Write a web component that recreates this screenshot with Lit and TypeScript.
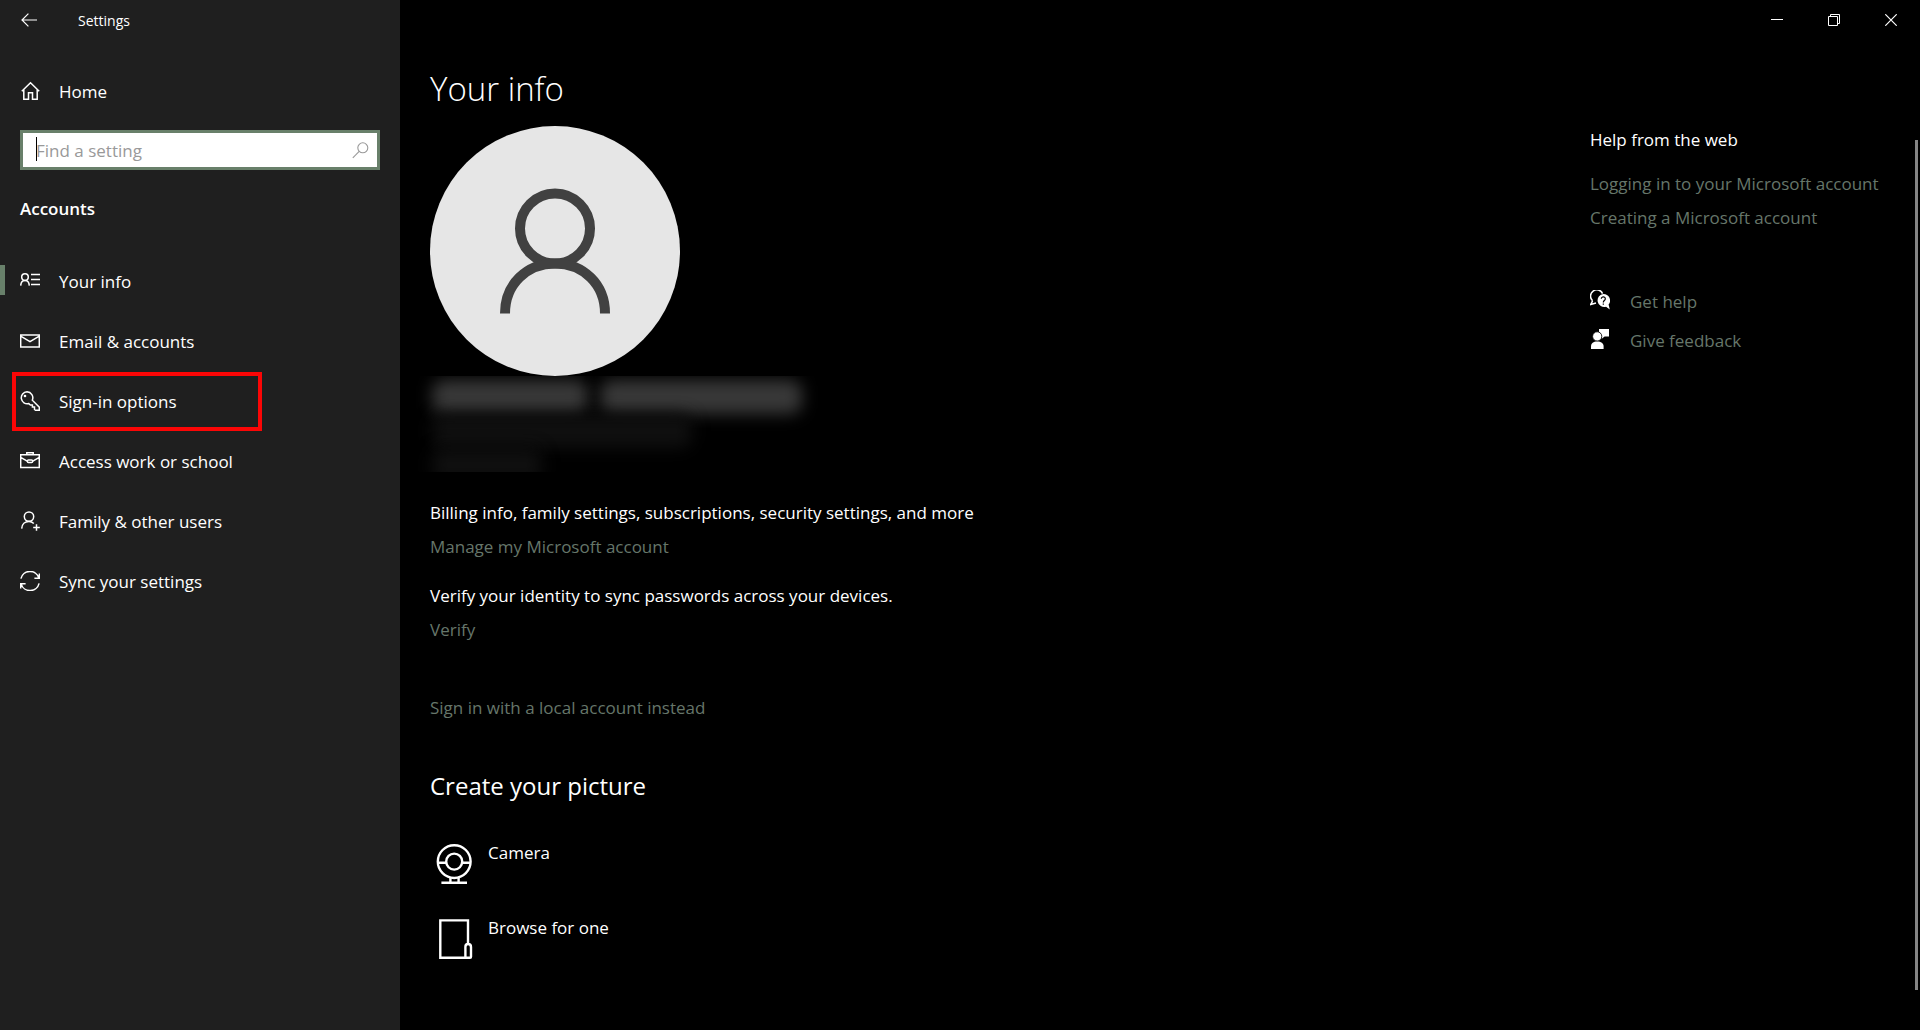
import { LitElement, html, css, svg } from "lit";
import { customElement, state } from "lit/decorators.js";
import { classMap } from "lit/directives/class-map.js";

const stroke = (body: unknown) => html`<svg class="glyph" viewBox="0 0 20 20" width="20" height="20" fill="none" stroke="currentColor" stroke-width="1.5" aria-hidden="true">${body}</svg>`;

const icons = {
  home: svg`<path d="M1.8 10.2 L10.5 1.8 L19.2 10.2 M3.8 8.6 V18.2 H8.5 V11.8 H12.5 V18.2 H17.2 V8.6" />`,
  info: svg`<circle cx="5" cy="6.1" r="3.3" /><path d="M0.7 14.6 C0.9 11.4 2.8 9.5 5 9.5 S9.1 11.4 9.3 14.6 M11 3.5 H20 M11 8.5 H20 M11 13.5 H20" />`,
  mail: svg`<path d="M0.7 4 H19.3 V16 H0.7 Z M0.7 5.2 L10 10.6 L19.3 5.2" />`,
  key: svg`<path d="M7 0.8 A6 6 0 1 0 8.8 12.6 L10.4 14 H12.4 V16 H14.5 V18.4 L15.6 19.3 H19.3 V16.2 L12.3 9.2 A6 6 0 0 0 7 0.8 Z" /><circle cx="5" cy="5" r="1.3" fill="currentColor" stroke="none" />`,
  work: svg`<path d="M0.7 3.8 H19.3 V16.5 H0.7 Z M6.8 3.8 V1.8 H13.2 V3.8 M0.7 6.4 L7.2 10.2 M12.8 10.2 L19.3 6.4" /><rect x="7.4" y="9" width="5.2" height="2.6" rx="1" />`,
  family: svg`<circle cx="9" cy="5.6" r="4.7" /><path d="M1.7 17.6 C1.9 13.2 5 10.4 9 10.4 C11 10.4 12.6 11.3 13.8 12.5 M16.5 13.2 V19.8 M13.2 16.5 H19.8" />`,
  sync: svg`<path d="M0.9 7.6 A9.3 9.3 0 0 1 18.8 6.8 M19.4 2.4 V7.3 H14.4 M19.1 12.4 A9.3 9.3 0 0 1 1.2 13.2 M0.7 17.6 V12.7 H5.6" />`,
};

const navItems = [
  { icon: icons.info, label: "Your info" },
  { icon: icons.mail, label: "Email & accounts" },
  { icon: icons.key, label: "Sign-in options", marked: true },
  { icon: icons.work, label: "Access work or school" },
  { icon: icons.family, label: "Family & other users" },
  { icon: icons.sync, label: "Sync your settings" },
];

@customElement("app-root")
export class AppRoot extends LitElement {
  @state() private current = "Your info";

  static styles = css`
    :host {
      --accent: #68806a;
      --link: #66766a;
      display: flex;
      min-height: 100vh;
      background: #000;
      color: #fff;
      font-family: "Open Sans", "Noto Sans", sans-serif;
      font-size: 17px;
      line-height: 24px;
    }
    *, *::before, *::after { box-sizing: border-box; }
    h1, h2, p { margin: 0; }
    button {
      border: 0;
      padding: 0;
      background: none;
      color: inherit;
      font: inherit;
      text-align: left;
    }
    svg { display: block; flex: none; }
    a { color: var(--link); text-decoration: none; }

    .sidebar { flex: none; width: 400px; background: #1f1f1f; }
    .titlebar { display: flex; align-items: center; height: 40px; font-size: 14px; }
    .back { display: grid; place-items: center; width: 58px; height: 40px; }
    .app-name { padding: 2px 0 0 20px; }
    .row {
      position: relative;
      display: flex;
      align-items: center;
      gap: 19px;
      width: 100%;
      height: 60px;
      padding: 0 20px;
      color: #fff;
    }
    .label { padding-top: 2px; }
    .home { margin-top: 21px; }
    .search { position: relative; display: flex; margin: 9px 20px 0; }
    .search-box {
      width: 100%;
      height: 40px;
      padding: 0 40px 0 13px;
      border: 3px solid var(--accent);
      border-radius: 0;
      outline: 0;
      background: #fff;
      color: #000;
      font: inherit;
    }
    .search-box::placeholder { color: #999; opacity: 1; }
    .caret { position: absolute; left: 16px; top: 7px; width: 1px; height: 24px; background: #000; }
    .lens { position: absolute; right: 11px; top: 12px; color: #999; }
    .section { margin: 27px 20px 30px; font-size: 17px; font-weight: 600; }
    .current::before {
      content: "";
      position: absolute;
      left: 0;
      top: 14px;
      width: 5px;
      height: 30px;
      background: var(--accent);
    }
    .marked::after {
      content: "";
      position: absolute;
      left: 12px;
      top: 1px;
      width: 250px;
      height: 59px;
      border: 4px solid #fb0606;
    }

    .main { flex: 1; min-width: 0; display: flex; flex-direction: column; }
    .window-bar { display: flex; justify-content: flex-end; height: 40px; padding-right: 1px; }
    .win { display: grid; place-items: center; width: 57px; height: 40px; }
    .body { flex: 1; display: flex; }
    .content { flex: 1; min-width: 0; padding: 25px 0 40px 30px; }
    .title { font-size: 33px; line-height: 48px; font-weight: 300; margin-bottom: 13px; }
    .hidden-details {
      display: flex;
      flex-direction: column;
      width: 402px;
      height: 96px;
      margin: 0 0 29px -14px;
      padding: 4px 16px 0;
      overflow: hidden;
    }
    .smear { display: flex; gap: 12px; }
    .blot { height: 34px; border-radius: 12px; background: #383838; filter: blur(8px); }
    .blot.first { width: 158px; }
    .blot.last { width: 204px; }
    .blot.faint { flex: none; background: #0f0f0f; }
    .blot.wide { width: 260px; }
    .blot.short { width: 110px; }
    .group { display: flex; flex-direction: column; align-items: flex-start; gap: 10px; margin-bottom: 25px; }
    .local { display: inline-block; margin-top: 29px; }
    .subtitle { margin: 50px 0 39px; font-size: 24px; line-height: 32px; font-weight: 400; }
    .sources { display: flex; flex-direction: column; align-items: flex-start; gap: 31px; }
    .source { display: flex; gap: 12px; height: 44px; padding-left: 6px; }
    .source svg { margin-top: 3px; }
    .help { flex: none; width: 325px; padding: 88px 0 40px; }
    .links { display: flex; flex-direction: column; align-items: flex-start; gap: 10px; margin: 20px 0 60px; }
    .support { display: flex; flex-direction: column; align-items: flex-start; gap: 15px; }
    .support-link { display: flex; align-items: flex-start; gap: 20px; }
    .support-link svg { color: #fff; }
    .scrollbar { flex: none; width: 3px; margin: 100px 2px 40px 0; background: #858585; }
  `;

  render() {
    return html`
      <nav class="sidebar" aria-label="Settings">
        <div class="titlebar">
          <button class="back" aria-label="Back">
            <svg viewBox="0 0 16 14" width="16" height="14" fill="none" stroke="currentColor" stroke-width="1.2"><path d="M16 7 H1 M7.4 0.6 L1 7 L7.4 13.4" /></svg>
          </button>
          <span class="app-name">Settings</span>
        </div>
        <a class="row home" href="#home">${stroke(icons.home)}<span class="label">Home</span></a>
        <div class="search">
          <input class="search-box" type="text" aria-label="Find a setting" placeholder="Find a setting" />
          <span class="caret"></span>
          <svg class="lens" viewBox="0 0 17 17" width="17" height="17" fill="none" stroke="currentColor" stroke-width="1.1" aria-hidden="true"><circle cx="10.8" cy="5.8" r="5" /><path d="M7.2 9.3 L0.8 15.8" /></svg>
        </div>
        <h2 class="section">Accounts</h2>
        ${navItems.map(
          (item) => html`<button
            class=${classMap({ row: true, current: item.label === this.current, marked: !!item.marked })}
            @click=${() => (this.current = item.label)}
          >${stroke(item.icon)}<span class="label">${item.label}</span></button>`
        )}
      </nav>

      <div class="main">
        <div class="window-bar">
          <button class="win" aria-label="Minimize"><svg viewBox="0 0 12 12" width="12" height="12"><path d="M0 5.5 H12" stroke="currentColor" /></svg></button>
          <button class="win" aria-label="Restore"><svg viewBox="0 0 12 12" width="12" height="12" fill="none" stroke="currentColor"><path d="M0.5 2.5 H9.5 V11.5 H0.5 Z M2.5 2.5 V0.5 H11.5 V9.5 H9.5" /></svg></button>
          <button class="win" aria-label="Close"><svg viewBox="0 0 12 12" width="12" height="12" stroke="currentColor" stroke-width="1.2"><path d="M0.3 0.3 L11.7 11.7 M11.7 0.3 L0.3 11.7" /></svg></button>
        </div>
        <div class="body">
          <main class="content">
            <h1 class="title">Your info</h1>
            <svg viewBox="0 0 250 250" width="250" height="250" role="img" aria-label="Account picture">
              <circle cx="125" cy="125" r="125" fill="#e6e6e6" />
              <g fill="none" stroke="#414141" stroke-width="10"><circle cx="125" cy="102.5" r="35" /><path d="M75 187.500 C75 158 97 137.500 125 137.500 S175 158 175 187.500" /></g>
            </svg>
            <div class="hidden-details" aria-hidden="true">
              <div class="smear"><div class="blot first"></div><div class="blot last"></div></div>
              <div class="blot faint wide"></div>
              <div class="blot faint short"></div>
            </div>
            <div class="group">
              <p>Billing info, family settings, subscriptions, security settings, and more</p>
              <a href="#manage">Manage my Microsoft account</a>
            </div>
            <div class="group">
              <p>Verify your identity to sync passwords across your devices.</p>
              <a href="#verify">Verify</a>
            </div>
            <a class="local" href="#local">Sign in with a local account instead</a>
            <h2 class="subtitle">Create your picture</h2>
            <div class="sources">
              <button class="source">
                <svg viewBox="0 0 40 40" width="40" height="40" fill="none" stroke="currentColor" stroke-width="2.4"><circle cx="18.2" cy="17.6" r="16.4" /><circle cx="18.2" cy="17.6" r="8" /><path d="M2 18.8 H10.2 M26.2 18.8 H34.4 M14.4 34 V38.5 M22.6 34 V38.5 M5.4 38.8 H31" /></svg>
                <span>Camera</span>
              </button>
              <button class="source">
                <svg viewBox="0 0 40 40" width="40" height="40" fill="none" stroke="currentColor" stroke-width="2.4"><path d="M32 25 V1.4 H4.3 V38.8 H34 Q35 38.8 35 37.8 V28 Q35 25 32 25 Q29.4 25 29.4 28 V38.8" /></svg>
                <span>Browse for one</span>
              </button>
            </div>
          </main>
          <aside class="help">
            <p>Help from the web</p>
            <div class="links">
              <a href="#login">Logging in to your Microsoft account</a>
              <a href="#create">Creating a Microsoft account</a>
            </div>
            <div class="support">
              <a class="support-link" href="#help">
                <svg viewBox="0 0 20 20" width="20" height="20" aria-hidden="true">
                  <path d="M2.6 10.8 A6.3 6.3 0 1 1 12.6 3.6 M2.6 10.8 L0.8 14.4 L6 13" fill="none" stroke="currentColor" stroke-width="1.5" />
                  <path d="M13.4 3.9 A6.6 6.6 0 1 0 16 16.8 L19.8 19.4 L18.6 14.6 A6.6 6.6 0 0 0 13.4 3.9 Z" fill="currentColor" />
                  <path d="M11.3 8.8 C11.3 6.2 15.4 6.3 15.3 8.9 C15.2 10.6 13.3 10.4 13.3 12.4 M13.3 13.4 V14.8" fill="none" stroke="#000" stroke-width="1.2" />
                </svg>
                <span>Get help</span>
              </a>
              <a class="support-link" href="#feedback">
                <svg viewBox="0 0 20 20" width="20" height="20" aria-hidden="true" fill="currentColor">
                  <path d="M9 0 H19 V7.6 H14.6 L11.8 9.8 V7 A5 5 0 0 0 9 2.8 Z" />
                  <circle cx="7.2" cy="7.4" r="4.6" stroke="#000" stroke-width="0.8" />
                  <path d="M1 20 V17.4 C1 14.4 3.4 12.6 7.2 12.6 S13.6 14.4 13.6 17.4 V20 Z" />
                </svg>
                <span>Give feedback</span>
              </a>
            </div>
          </aside>
          <div class="scrollbar"></div>
        </div>
      </div>
    `;
  }
}
